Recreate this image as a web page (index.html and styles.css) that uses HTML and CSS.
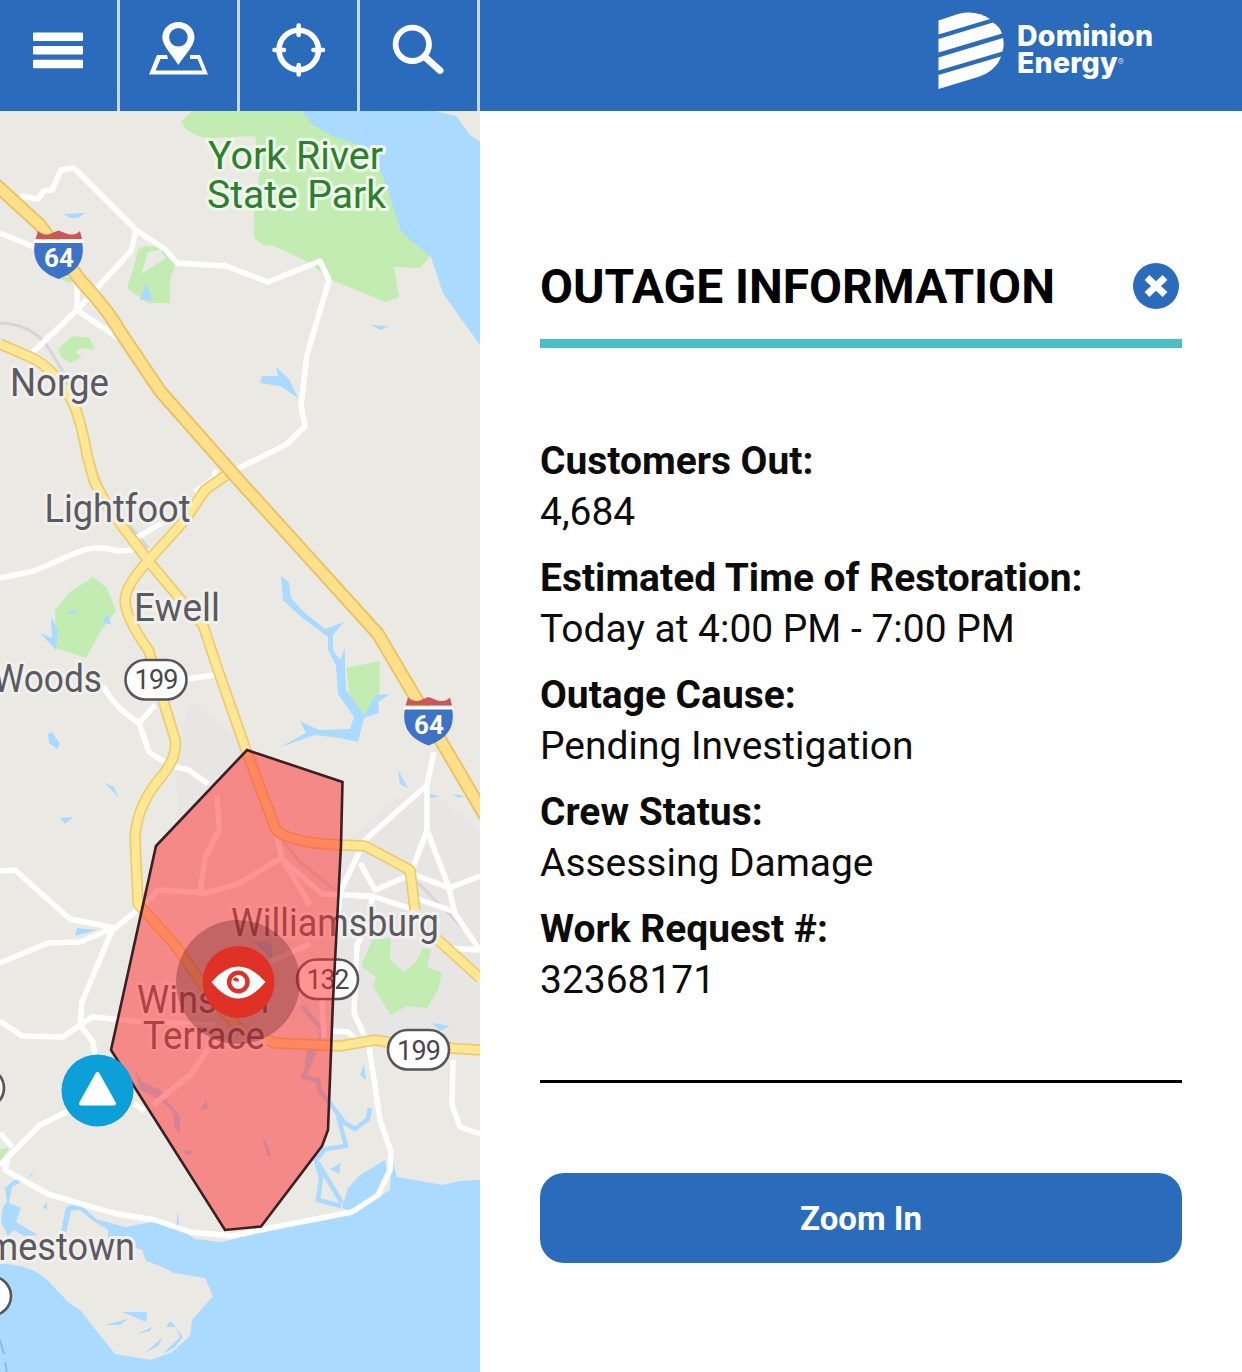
FILE: index.html
```html
<!DOCTYPE html>
<html lang="en">
<head>
    <meta charset="UTF-8">
    <meta name="viewport" content="width=device-width, initial-scale=1.0">
    <title>Outage Map</title>
    <link rel="stylesheet" href="styles.css">
</head>
<body>
    <header class="topbar">
        <nav class="tools">
            <button class="tool" aria-label="Menu">
                <svg width="118" height="111" viewBox="0 0 118 111" fill="#fff">
                    <rect x="33" y="32.5" width="50" height="8.5" rx="1"/>
                    <rect x="33" y="46" width="50" height="8.5" rx="1"/>
                    <rect x="33" y="59.7" width="50" height="8.5" rx="1"/>
                </svg>
            </button>
            <button class="tool" aria-label="Map location">
                <svg width="118" height="111" viewBox="120 0 118 111">
                    <path d="M167 55H157L149 74.500H208L200 55H190V59H197.500L202.500 70.500H155.500L160.500 59H168Z" fill="#fff"/>
                    <path fill-rule="evenodd" d="M178.300 65C173 56 162.300 46 162.300 37.500A16 15.300 0 0 1 194.500 37.500C194.500 46 184 56 178.300 65ZM178.400 28A9.300 9.300 0 1 0 178.400 46.600A9.300 9.300 0 1 0 178.400 28Z" fill="#fff"/>
                </svg>
            </button>
            <button class="tool" aria-label="Locate me">
                <svg width="118" height="111" viewBox="240 0 118 111" fill="none" stroke="#fff">
                    <circle cx="298.700" cy="50" r="19.700" stroke-width="5.600"/>
                    <path d="M298.700 25.500V35M298.700 65V74.500M274.500 50H284M313.500 50H323" stroke-width="4.600" stroke-linecap="round"/>
                </svg>
            </button>
            <button class="tool" aria-label="Search">
                <svg width="118" height="111" viewBox="360 0 118 111" fill="none" stroke="#fff">
                    <circle cx="412.300" cy="44.300" r="16.700" stroke-width="5.800"/>
                    <path d="M425 57L440 70.500" stroke-width="7" stroke-linecap="round"/>
                </svg>
            </button>
        </nav>
        <div class="brand">
            <svg class="brand-mark" width="66" height="78" viewBox="938 12 66 78" fill="#fff">
                <path d="M938.500 20.500L958 14C970 11 981 13 990 19L938.500 34.500Z"/>
                <path d="M938.500 39L993 22.500Q1000 27 1002 33.500L938.500 52.500Z"/>
                <path d="M938.500 57.500L1003 38Q1004.500 45 1002.500 51.500L938.500 70.500Z"/>
                <path d="M938.500 75L1001 56.500C998 66 990 73 978 77L938.500 89Z"/>
            </svg>
            <div class="brand-name">Dominion<br>Energy<span class="reg">®</span></div>
        </div>
    </header>

    <main class="content">
        <svg class="map" width="480" height="1261" viewBox="0 111 480 1261">
            <rect class="land" x="0" y="111" width="480" height="1261"/>

            <!-- built-up areas -->
            <path class="urban" d="M190 700L246 745L290 835L342 845L395 800L430 790L480 830V1045H340L300 1040L240 900L180 880L175 760Z"/>

            <!-- parks -->
            <g class="park">
                <path d="M192 111L181 122L187 130L200 137L214 138L255 136L260 172L254 210V238L264 246L272 245L310 263L329 279L386 302L399 297L394 267L420 268L431 256L400 190L360 111Z"/>
                <path fill-rule="evenodd" d="M145 246L165 247L176 263L170 280V303H148L127 288L133 270L138 250ZM148 252L143 268L141 274L166 258L160 250Z"/>
                <path d="M58 349L72 336L90 338L95 350L80 348L75 352L82 357L70 363L61 357Z"/>
                <path d="M54 277H75L70 283Z"/>
                <path d="M93 577L107 588L116 611L100 632L86 658L56 648L55 610L70 592Z"/>
                <path d="M346 668L380 661L379 700L374 712L364 717L350 700Z"/>
                <path d="M372 940L391 938L390 959L404 972L416 962L423 947L431 950L427 967L442 973L438 990L427 1008L407 1006L391 1015L373 987L376 977L361 966Z"/>
                <path d="M0 1150L10 1147L0 1162Z"/>
                <path d="M403 1372L406 1340L428 1324L441 1333L463 1372Z"/>
            </g>

            <!-- rivers and creeks -->
            <g class="water">
                <path d="M301 111H435L456 116L470 135L480 142V345L462 320L443 293L431 257L401 232L388 190L372 150L333 136L313 125Z"/>
                <path d="M0 1264C20 1264 40 1270 52 1285L68 1302L80 1310L115 1354L151 1360L172 1352L190 1336L192 1320L213 1296L205 1278L174 1273L160 1266L146 1261L142 1250L108 1238L108 1230L92 1220L80 1210L68 1211L70 1205L82 1206L96 1219L125 1227L152 1222L175 1226L195 1239L222 1242L252 1234L352 1214L390 1190L392 1160L397 1177L443 1185L460 1181L480 1180V1372H0Z"/>
                <path d="M34 1170L31 1176L12 1187L9 1203L21 1208L16 1222L38 1235L24 1236L14 1230L8 1236L1 1222L3 1207L7 1202L5 1188L14 1180L28 1178Z"/>
                <path d="M43 1207L47 1202V1210Z"/>
                <path d="M60 1236L66 1207L72 1206L66 1234Z"/>
                <path d="M176 1226L178 1211L179 1226Z"/>
                <path d="M63 214L85 213L78 218H70Z"/>
                <path d="M370 325L389 326L381 330Z"/>
                <path d="M146 283L153 300H140Z"/>
                <path d="M262 376H278L276 367L289 379L298 398L280 386L260 383Z"/>
                <path d="M65 614L78 608L73 614ZM107 613L111 624L103 623ZM51 617L58 630L56 650L40 633L52 638Z"/>
                <path d="M48 734L52 732L60 744L57 749L49 743ZM105 783L114 787L119 798ZM60 818L73 817L65 824ZM77 928L97 930L75 936Z"/>
                <path d="M281 576L289 582L291 598L305 613L325 629L344 622L333 635V650L340 660L345 648V668L346 690L364 715L376 695L390 694L378 702L379 713L364 718L358 742L340 738L315 735L280 747L306 733L300 721L319 730L350 729L354 717L338 694L336 666L328 650V637L300 616L283 600Z"/>
                <path d="M398 770L408 788L400 784ZM428 794L440 796L430 798ZM453 794L464 796L459 798ZM432 1023L450 1026L440 1031ZM364 1064L366 1080L360 1075Z"/>
                <path d="M252 940L272 944V960ZM308 1045L318 1038L312 1060L304 1066Z"/>
                <path d="M385 1160L360 1175L348 1188L342 1208L352 1212L378 1194L388 1178ZM330 1169L341 1163L339 1174Z"/>
                <path d="M135 1070L142 1082L160 1090L168 1102L180 1116V1133L175 1128L172 1110L154 1096L140 1090ZM206 1100L208 1108L200 1110ZM262 1136L269 1147L271 1158L267 1155ZM183 1151L194 1150L188 1156Z"/>
                <path d="M122 1312L147 1312L146 1322ZM104 1325L128 1319L120 1325ZM137 1334L152 1327L150 1331ZM170 1321L176 1327H166ZM145 1353L163 1337L158 1346ZM162 1354L180 1337L175 1327L183 1337L174 1348Z"/>
            </g>
            <path class="creek" d="M302 1006L323 1031L310 1062L303 1077L318 1080L320 1091L332 1106L345 1123L355 1129L368 1119L370 1108M338 1116L346 1146L325 1149L316 1160L321 1178L318 1200L341 1206M318 1163L342 1203"/>
            <path class="ferry" d="M0 1340L4 1354M5 1362L7 1372"/>

            <!-- rail -->
            <path class="rail" d="M0 323Q32 324 48 347L65 375M90 455L105 495L148 548M278 835L300 862L335 890M375 850L420 885L480 945"/>

            <!-- local roads -->
            <g class="road">
                <path d="M20 196L38 199L44 191L52 190L61 170L74 168L136 230L166 250L177 263L226 266L268 282L320 261L329 280L307 355L301 405L305 426L287 444L235 470M136 230L131 251L77 310L30 355M77 266V310L118 338M0 233L34 247"/>
                <path d="M216 470L214 478L195 492M165 521L133 540M133 550L118 551Q94 544 76 553L34 571L0 578"/>
                <path d="M187 679L215 675M103 686Q115 708 139 723L155 705M139 723L149 752L171 766L189 770L208 784M217 795L219 830L205 858L200 893M145 904L158 890L205 893L238 884L281 858M275 830L282 858L310 905M281 858L322 894L372 896"/>
                <path d="M0 871L15 870L26 880L70 919L115 928L145 904M0 963L48 943L80 942L113 928L82 1002L80 1025L93 1042L95 1055M0 1021L22 1036L63 1037L92 1017L135 1021L215 1025M215 1040L190 1075L153 1105M134 1104L145 1111M68 1111L40 1125L0 1165M0 1133L12 1147M8 1160L5 1170L48 1194L88 1206L117 1214L155 1220L190 1232L233 1236L270 1228L352 1212L378 1195L390 1170L391 1152L380 1120L369 1046L354 1013L357 945L370 920M341 890L365 840L427 785L434 752M427 783V830L413 868M427 830L449 888L455 914L480 950M360 863L375 890L408 876M415 875L449 888L480 876M357 896L372 896L415 910M415 898L455 912M372 896L370 920M450 948L480 950M330 1031L348 1032L359 1042M453 1060L452 1105L460 1127L480 1134M270 962L310 944M322 1000L324 1038M341 885L335 940"/>
            </g>

            <!-- primary routes -->
            <g class="primary-edge">
                <path d="M0 344L30 357Q55 368 73 403Q81 420 87 455L94 481L110 510L150 563L181 600L203 625L218 670L246 750L276 830Q290 843 342 845L365 846L410 870L415 910"/>
                <path d="M228 474L205 490L185 520L148 561Q126 585 125 600Q125 617 149 651L163 700L175 739Q178 756 162 776Q138 803 135 836L138 904L175 945L210 995L240 1030L275 1043L340 1046L375 1040L405 1045L480 1050M437 939L480 978"/>
            </g>
            <g class="primary">
                <path d="M0 344L30 357Q55 368 73 403Q81 420 87 455L94 481L110 510L150 563L181 600L203 625L218 670L246 750L276 830Q290 843 342 845L365 846L410 870L415 910"/>
                <path d="M228 474L205 490L185 520L148 561Q126 585 125 600Q125 617 149 651L163 700L175 739Q178 756 162 776Q138 803 135 836L138 904L175 945L210 995L240 1030L275 1043L340 1046L375 1040L405 1045L480 1050M437 939L480 978"/>
            </g>

            <!-- interstate 64 -->
            <path class="highway-edge" d="M-5 184L40 225L80 280Q108 310 119 330L160 391L235 476L378 634L424 712L485 816"/>
            <path class="highway" d="M-5 184L40 225L80 280Q108 310 119 330L160 391L235 476L378 634L424 712L485 816"/>

            <!-- route shields -->
            <g id="i64">
                <path d="M35 242C31 262 42 273 58.500 279C75 273 86 262 82 242Z" fill="#3c73c6"/>
                <path d="M34 241.500H83" stroke="#fff" stroke-width="3"/>
                <path d="M35.500 239L38 231Q45 237 52 233L58.500 230.500L65 233Q74 237 80 231L82 239Z" fill="#c9585a"/>
                <text class="shield-num" x="59" y="267" textLength="30">64</text>
            </g>
            <use href="#i64" x="370" y="466.500"/>
            <g class="oval">
                <rect x="125.500" y="660" width="61" height="39.500" rx="19.700"/>
                <rect x="297" y="959.500" width="61" height="39.500" rx="19.700"/>
                <rect x="388" y="1030" width="61" height="39.500" rx="19.700"/>
                <circle cx="-16" cy="1088" r="20"/>
                <circle cx="-8.500" cy="1296" r="19.500"/>
            </g>
            <g class="route-num">
                <text x="156.500" y="689" textLength="44">199</text>
                <text x="328" y="989" textLength="43">132</text>
                <text x="419" y="1059.500" textLength="44">199</text>
            </g>

            <!-- place names -->
            <g class="label park-label">
                <text x="208" y="169" textLength="175" lengthAdjust="spacingAndGlyphs">York River</text>
                <text x="207" y="208" textLength="179" lengthAdjust="spacingAndGlyphs">State Park</text>
            </g>
            <g class="label">
                <text x="10" y="396" textLength="99" lengthAdjust="spacingAndGlyphs">Norge</text>
                <text x="44.500" y="522" textLength="146" lengthAdjust="spacingAndGlyphs">Lightfoot</text>
                <text x="134" y="620.500" textLength="86" lengthAdjust="spacingAndGlyphs">Ewell</text>
                <text x="-7" y="691.500" textLength="109" lengthAdjust="spacingAndGlyphs">Woods</text>
                <text x="231" y="936" textLength="208" lengthAdjust="spacingAndGlyphs">Williamsburg</text>
                <text x="137" y="1012.500" textLength="132" lengthAdjust="spacingAndGlyphs">Winston</text>
                <text x="143" y="1048.500" textLength="122" lengthAdjust="spacingAndGlyphs">Terrace</text>
                <text x="-53" y="1260" textLength="188" lengthAdjust="spacingAndGlyphs">Jamestown</text>
            </g>

            <!-- selected outage -->
            <path class="outage" d="M247 750L342.500 782L341 845L333 1000L328 1130L322 1146L261 1226.500L225 1230L111 1050L156 846Z"/>
            <circle cx="238" cy="982" r="62" fill="#5c1820" fill-opacity=".32"/>
            <circle cx="238.500" cy="982" r="36" fill="#df3126"/>
            <path d="M211.500 982Q238 951 265.500 982Q238 1015 211.500 982Z" fill="#fff"/>
            <circle cx="238.300" cy="982" r="9.200" fill="#fff" stroke="#df3126" stroke-width="4.500"/>
            <path d="M234 978.500A4.500 4.500 0 0 0 238.500 979.500" fill="none" stroke="#df3126" stroke-width="3.500"/>

            <circle cx="97.500" cy="1090.500" r="36" fill="#0d9fd8"/>
            <path d="M97.500 1074L114 1103.500H81Z" fill="#fff" stroke="#fff" stroke-width="4" stroke-linejoin="round"/>
        </svg>

        <section class="panel">
            <div class="panel-head">
                <h1>OUTAGE INFORMATION</h1>
                <button class="close" aria-label="Close">
                    <svg width="46" height="46" viewBox="0 0 46 46">
                        <circle cx="23" cy="23" r="23" fill="#2a6cbb"/>
                        <path d="M14 14.500L32 31.500M32 14.500L14 31.500" stroke="#fff" stroke-width="7"/>
                    </svg>
                </button>
            </div>
            <dl class="details">
                <dt>Customers Out:</dt>
                <dd>4,684</dd>
                <dt>Estimated Time of Restoration:</dt>
                <dd>Today at 4:00 PM - 7:00 PM</dd>
                <dt>Outage Cause:</dt>
                <dd>Pending Investigation</dd>
                <dt>Crew Status:</dt>
                <dd>Assessing Damage</dd>
                <dt>Work Request #:</dt>
                <dd>32368171</dd>
            </dl>
            <button class="zoom-btn">Zoom In</button>
        </section>
    </main>
</body>
</html>
```
FILE: styles.css
```css
* {
    box-sizing: border-box;
}

body {
    margin: 0;
    width: 1242px;
    height: 1372px;
    overflow: hidden;
    font-family: Roboto, sans-serif;
    background-color: #fff;
    color: #0c0c0c;
}

button {
    border: none;
    padding: 0;
    background: none;
    font-family: inherit;
    cursor: pointer;
}

svg {
    display: block;
}

/* Top bar */
.topbar {
    display: flex;
    justify-content: space-between;
    height: 111px;
    background-color: #2a6cbb;
}

.tools {
    display: flex;
}

.tool {
    width: 120px;
    height: 111px;
    border-right: 3px solid #c4dcf8;
}

.tool svg {
    width: 118px;
    margin-right: -1px;
}

.brand {
    display: flex;
    gap: 13px;
    width: 304px;
    padding-top: 12px;
}

.brand-name {
    padding-top: 10px;
    font-family: Inter, sans-serif;
    font-weight: 800;
    font-size: 28.5px;
    line-height: 27px;
    letter-spacing: 0.2px;
    color: #fff;
    white-space: nowrap;
}

.reg {
    font-size: 9px;
    font-weight: 400;
    vertical-align: 8px;
    line-height: 0;
    opacity: 0.7;
}

.content {
    display: flex;
    height: 1261px;
}

/* Map */
.map {
    flex: none;
}

.land {
    fill: #ebe9e4;
}

.urban {
    fill: #e8e6e5;
}

.park {
    fill: #c3ecb3;
}

.water {
    fill: #aadaff;
}

.creek {
    fill: none;
    stroke: #aadaff;
    stroke-width: 4.5;
}

.ferry {
    fill: none;
    stroke: #8fb9e8;
    stroke-width: 2;
}

.rail {
    fill: none;
    stroke: #d5d5da;
    stroke-width: 3;
}

.road {
    fill: none;
    stroke: #fff;
    stroke-width: 5.5;
    stroke-linejoin: round;
}

.primary-edge,
.primary,
.highway-edge,
.highway {
    fill: none;
    stroke-linejoin: round;
}

.primary-edge {
    stroke: #eccb74;
    stroke-width: 11.5;
}

.primary {
    stroke: #ffe793;
    stroke-width: 8;
}

.highway-edge {
    stroke: #e9c368;
    stroke-width: 14;
}

.highway {
    stroke: #ffe08a;
    stroke-width: 10;
}

.shield-num {
    font-size: 26px;
    font-weight: 700;
    fill: #fff;
    text-anchor: middle;
}

.oval {
    fill: #fff;
    stroke: #56565a;
    stroke-width: 2.6;
}

.route-num {
    font-size: 27px;
    fill: #47474b;
    text-anchor: middle;
}

.label {
    font-size: 38px;
    fill: #5a5a62;
    stroke: #f1f0ed;
    stroke-width: 6px;
    stroke-linejoin: round;
    paint-order: stroke;
}

.park-label {
    fill: #2d7f2d;
    stroke: #eef8ea;
}

.outage {
    fill: #ff2a2a;
    fill-opacity: 0.5;
    stroke: #3a2023;
    stroke-width: 2.6;
}

/* Outage panel */
.panel {
    flex: 1;
    padding: 140px 60px 0;
}

.panel-head {
    display: flex;
    justify-content: space-between;
    align-items: center;
    height: 97px;
    padding: 0 3px 18px 0;
    border-bottom: 9px solid #4dbdc6;
}

h1 {
    margin: 0;
    padding-top: 2px;
    font-size: 47.9px;
    line-height: 56px;
    font-weight: 700;
    color: #000;
}

.details {
    height: 735px;
    margin: 0;
    padding-top: 88px;
    border-bottom: 3px solid #000;
    font-size: 38.95px;
    line-height: 51px;
}

dt {
    font-weight: 700;
}

dd {
    margin: 0 0 15px;
}

.zoom-btn {
    display: block;
    width: 100%;
    height: 90px;
    margin-top: 90px;
    border-radius: 24px;
    background-color: #2a6cbb;
    color: #fff;
    font-size: 33px;
    font-weight: 700;
}
```
